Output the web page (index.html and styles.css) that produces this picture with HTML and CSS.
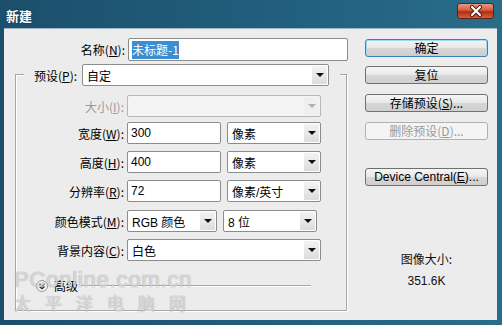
FILE: index.html
```html
<!DOCTYPE html>
<html lang="zh-CN">
<head>
<meta charset="utf-8">
<title>新建</title>
<link rel="stylesheet" href="styles.css">
</head>
<body>
<div class="window">
  <div class="titlebar">
    <span class="title">新建</span>
    <span class="close">
      <svg width="18" height="12" viewBox="0 0 18 12"><path d="M5 2 L13 10 M13 2 L5 10" stroke="#4a1a10" stroke-width="4" stroke-linecap="round"/><path d="M5 2 L13 10 M13 2 L5 10" stroke="#fff" stroke-width="2.2" stroke-linecap="round"/></svg>
    </span>
  </div>
  <div class="client">
    <div class="left">
      <div class="row name-row">
        <label class="lbl">名称(<u>N</u>):</label>
        <div class="field name-field"><span class="sel">未标题-1</span></div>
      </div>
      <div class="group">
        <div class="legend">
          <label class="leg-lbl">预设(<u>P</u>):</label>
          <div class="combo w247"><span class="val">自定</span><span class="arrow"></span></div>
        </div>
        <div class="row r-size">
          <label class="lbl dis">大小(<u>I</u>):</label>
          <div class="combo w194 disabled"><span class="val"></span><span class="arrow"></span></div>
        </div>
        <div class="row r-w">
          <label class="lbl">宽度(<u>W</u>):</label>
          <div class="field w94">300</div>
          <div class="combo w94"><span class="val">像素</span><span class="arrow"></span></div>
        </div>
        <div class="row r-n">
          <label class="lbl">高度(<u>H</u>):</label>
          <div class="field w94">400</div>
          <div class="combo w94"><span class="val">像素</span><span class="arrow"></span></div>
        </div>
        <div class="row r-n">
          <label class="lbl">分辨率(<u>R</u>):</label>
          <div class="field w94">72</div>
          <div class="combo w94"><span class="val">像素/英寸</span><span class="arrow"></span></div>
        </div>
        <div class="row r-c">
          <label class="lbl">颜色模式(<u>M</u>):</label>
          <div class="combo w90"><span class="val">RGB 颜色</span><span class="arrow"></span></div>
          <div class="combo w94"><span class="val">8 位</span><span class="arrow"></span></div>
        </div>
        <div class="row r-n">
          <label class="lbl">背景内容(<u>C</u>):</label>
          <div class="combo w194"><span class="val">白色</span><span class="arrow"></span></div>
        </div>
        <div class="adv">
          <span class="chev"><svg width="12" height="12" viewBox="0 0 12 12"><circle cx="6" cy="6" r="5.5" fill="#f4f4f4" stroke="#9a9a9a"/><path d="M3.5 3.8 L6 6 L8.5 3.8 M3.5 6.5 L6 8.7 L8.5 6.5" fill="none" stroke="#222" stroke-width="1.2"/></svg></span>
          <span class="adv-txt">高级</span>
          <span class="adv-line"></span>
        </div>
      </div>
    </div>
    <div class="right">
      <button class="btn default b-ok">确定</button>
      <button class="btn b-next">复位</button>
      <button class="btn b-next2">存储预设(<u>S</u>)...</button>
      <button class="btn disabled b-next3">删除预设(<u>D</u>)...</button>
      <button class="btn b-dc">Device Central(<u>E</u>)...</button>
      <div class="imgsize">
        <div>图像大小:</div>
        <div class="kb">351.6K</div>
      </div>
    </div>
  </div>
  <div class="watermark">
    <div class="wm1">PConline.com.cn</div>
    <div class="wm2">太平洋电脑网</div>
  </div>
</div>
</body>
</html>
```
FILE: styles.css
```css
html, body {
  margin: 0;
  padding: 0;
  width: 502px;
  height: 325px;
  overflow: hidden;
  background: #1e5675;
}
.window {
  position: relative;
  width: 502px;
  height: 325px;
  box-sizing: border-box;
  padding: 0 5px 5px 4px;
  background: linear-gradient(90deg, #1b4f6c, #22607f 60%, #2a6d89);
  font-family: "Liberation Sans", "Noto Sans CJK SC", sans-serif;
  font-size: 12px;
  color: #000;
  display: flex;
  flex-direction: column;
}
.titlebar {
  height: 28px;
  display: flex;
  align-items: flex-start;
  justify-content: space-between;
  flex: none;
}
.title {
  font-family: "Noto Sans CJK SC", sans-serif;
  font-weight: bold;
  font-size: 13px;
  color: #fff;
  margin-top: 6px;
  margin-left: 2px;
  text-shadow: 0 0 2px #0a2a3c;
}
.close {
  width: 37px;
  height: 16px;
  margin-top: 3px;
  margin-right: 3px;
  box-sizing: border-box;
  border: 1px solid #5b2418;
  border-radius: 3px;
  background: linear-gradient(#e99a85, #d45a3e 45%, #b52a12 55%, #d4603d);
  display: flex;
  align-items: center;
  justify-content: center;
}
.client {
  flex: 1;
  background: #ececec;
  border-top: 1px solid #9fb7c4;
  display: flex;
}
.left {
  width: 350px;
  flex: none;
}
.row {
  display: flex;
  align-items: center;
  height: 22px;
}
.lbl {
  font-family: "Noto Sans CJK SC", sans-serif;
  text-align: right;
  white-space: nowrap;
  margin-right: 3px;
}
.name-row {
  margin-top: 9px;
  height: 23px;
}
.name-row .lbl {
  width: 121px;
}
.group .lbl {
  width: 108px;
}
.dis { color: #9a9a9a; }
.field, .combo {
  box-sizing: border-box;
  height: 22px;
  border: 1px solid #8a8c8e;
  border-radius: 2px;
  background: #fff;
  display: flex;
  align-items: center;
  padding-left: 3px;
  font-family: "Liberation Sans", "Noto Sans CJK SC", sans-serif;
  white-space: nowrap;
}
.name-field {
  width: 220px;
  height: 23px;
}
.sel {
  background: #3d8ed0;
  color: #fff;
  font-family: "Noto Sans CJK SC", sans-serif;
  padding: 1px 0;
  line-height: 16px;
}
.w94 { width: 94px; }
.w90 { width: 90px; }
.w194 { width: 194px; }
.w247 { width: 247px; }
.field + .combo, .combo + .combo { margin-left: 6px; }
.combo { position: relative; padding-left: 4px; }
.combo .val {
  flex: 1;
  font-family: "Liberation Sans", "Noto Sans CJK SC", sans-serif;
}
.arrow {
  width: 15px;
  height: 18px;
  margin-right: 1px;
  border-radius: 1px;
  background: linear-gradient(#f3f3f3, #dcdcdc);
  display: flex;
  align-items: center;
  justify-content: center;
}
.arrow::after {
  content: "";
  width: 0;
  height: 0;
  border-left: 4px solid transparent;
  border-right: 4px solid transparent;
  border-top: 4px solid #111;
}
.combo.disabled {
  background: #f4f4f4;
  border-color: #b5b7b9;
}
.combo.disabled .arrow { background: #efefef; }
.combo.disabled .arrow::after { border-top-color: #b0b0b0; }

.group {
  margin-left: 11px;
  margin-top: 13px;
  width: 332px;
  height: 237px;
  box-sizing: border-box;
  border: 1px solid #a6a6a6;
  box-shadow: 1px 1px 0 #fff, inset 1px 1px 0 #fff;
}
.legend {
  display: flex;
  align-items: center;
  margin-top: -11px;
  margin-left: 8px;
  width: 316px;
  padding-left: 10px;
  box-sizing: border-box;
  background: #ececec;
}
.leg-lbl {
  font-family: "Noto Sans CJK SC", sans-serif;
  margin-right: 5px;
  white-space: nowrap;
}
.r-size { margin-top: 9px; }
.r-w { margin-top: 5px; }
.r-n { margin-top: 7px; }
.r-c { margin-top: 8px; }

.adv {
  display: flex;
  align-items: center;
  margin-top: 16px;
  margin-left: 20px;
}
.chev { display: flex; width: 12px; height: 12px; }
.adv-txt {
  font-family: "Noto Sans CJK SC", sans-serif;
  margin-left: 6px;
}
.adv-line {
  width: 230px;
  height: 0;
  margin-left: 3px;
  border-top: 1px solid #a6a6a6;
  border-bottom: 1px solid #fff;
}

.right {
  margin-left: 11px;
  width: 123px;
  display: flex;
  flex-direction: column;
}
.btn {
  width: 123px;
  height: 18px;
  box-sizing: border-box;
  border: 1px solid #707070;
  border-radius: 3px;
  background: linear-gradient(#f5f5f5, #e8e8e8 50%, #d6d6d6 51%, #cfcfcf);
  font-family: "Noto Sans CJK SC", sans-serif;
  font-size: 12px;
  color: #000;
  padding: 0;
  line-height: 14px;
  text-align: center;
}
.btn u { text-decoration: underline; }
.b-dc { font-family: "Liberation Sans", "Noto Sans CJK SC", sans-serif; }
.btn.default {
  border-color: #3c7fb1;
  box-shadow: inset 0 0 0 1px #9fdcf2;
}
.btn.disabled {
  border-color: #adb2b5;
  background: #f4f4f4;
  color: #9a9a9a;
}
.b-ok { margin-top: 10px; }
.b-next { margin-top: 9px; }
.b-next2 { margin-top: 10px; }
.b-next3 { margin-top: 10px; }
.b-dc { margin-top: 28px; }
.imgsize {
  margin-top: 64px;
  text-align: center;
  font-family: "Noto Sans CJK SC", sans-serif;
  color: #111;
}
.imgsize .kb {
  margin-top: 7px;
  font-family: "Liberation Sans", sans-serif;
}
.watermark {
  position: absolute;
  left: 14px;
  top: 268px;
  pointer-events: none;
  color: rgba(255, 255, 255, 0.6);
  text-shadow: 0 0 1px rgba(130, 130, 130, 0.55), 0 0 1px rgba(130, 130, 130, 0.55);
}
.wm1 {
  font-family: "Liberation Sans", sans-serif;
  font-size: 22px;
  line-height: 24px;
  letter-spacing: 0.8px;
}
.wm2 {
  font-family: "Noto Sans CJK SC", sans-serif;
  font-size: 17px;
  line-height: 20px;
  letter-spacing: 14px;
  margin-top: 1px;
}
```
